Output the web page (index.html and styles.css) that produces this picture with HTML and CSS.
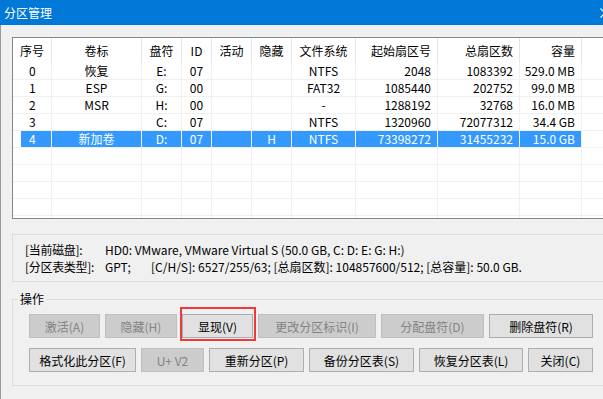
FILE: index.html
```html
<!DOCTYPE html>
<html lang="zh-CN">
<head>
    <meta charset="UTF-8">
    <title>分区管理</title>
    <link rel="stylesheet" href="styles.css">
</head>
<body>
<div class="window">
    <div class="titlebar">
        <span class="title">分区管理</span>
        <svg class="close-icon" width="10" height="10" viewBox="0 0 10 10">
            <path d="M0.5 0.5 L9.5 9.5 M9.5 0.5 L0.5 9.5" stroke="#fff" stroke-width="1.2"/>
        </svg>
    </div>

    <div class="main">
        <!-- partition list -->
        <div class="listview">
            <div class="lv-row lv-head">
                <div class="cell first">序号</div>
                <div class="cell">卷标</div>
                <div class="cell">盘符</div>
                <div class="cell">ID</div>
                <div class="cell">活动</div>
                <div class="cell">隐藏</div>
                <div class="cell">文件系统</div>
                <div class="cell right">起始扇区号</div>
                <div class="cell right">总扇区数</div>
                <div class="cell right">容量</div>
                <div class="cell fill"></div>
            </div>
            <div class="lv-body">
                <div class="lv-row">
                    <div class="cell first">0</div>
                    <div class="cell">恢复</div>
                    <div class="cell">E:</div>
                    <div class="cell">07</div>
                    <div class="cell"></div>
                    <div class="cell"></div>
                    <div class="cell">NTFS</div>
                    <div class="cell right">2048</div>
                    <div class="cell right">1083392</div>
                    <div class="cell right">529.0 MB</div>
                    <div class="cell fill"></div>
                </div>
                <div class="lv-row">
                    <div class="cell first">1</div>
                    <div class="cell">ESP</div>
                    <div class="cell">G:</div>
                    <div class="cell">00</div>
                    <div class="cell"></div>
                    <div class="cell"></div>
                    <div class="cell">FAT32</div>
                    <div class="cell right">1085440</div>
                    <div class="cell right">202752</div>
                    <div class="cell right">99.0 MB</div>
                    <div class="cell fill"></div>
                </div>
                <div class="lv-row">
                    <div class="cell first">2</div>
                    <div class="cell">MSR</div>
                    <div class="cell">H:</div>
                    <div class="cell">00</div>
                    <div class="cell"></div>
                    <div class="cell"></div>
                    <div class="cell">-</div>
                    <div class="cell right">1288192</div>
                    <div class="cell right">32768</div>
                    <div class="cell right">16.0 MB</div>
                    <div class="cell fill"></div>
                </div>
                <div class="lv-row">
                    <div class="cell first">3</div>
                    <div class="cell"></div>
                    <div class="cell">C:</div>
                    <div class="cell">07</div>
                    <div class="cell"></div>
                    <div class="cell"></div>
                    <div class="cell">NTFS</div>
                    <div class="cell right">1320960</div>
                    <div class="cell right">72077312</div>
                    <div class="cell right">34.4 GB</div>
                    <div class="cell fill"></div>
                </div>
                <div class="lv-row selected">
                    <div class="cell first">4</div>
                    <div class="cell">新加卷</div>
                    <div class="cell">D:</div>
                    <div class="cell">07</div>
                    <div class="cell"></div>
                    <div class="cell">H</div>
                    <div class="cell">NTFS</div>
                    <div class="cell right">73398272</div>
                    <div class="cell right">31455232</div>
                    <div class="cell right">15.0 GB</div>
                    <div class="cell fill"></div>
                </div>
                <div class="lv-row empty"><div class="cell"></div><div class="cell"></div><div class="cell"></div><div class="cell"></div><div class="cell"></div><div class="cell"></div><div class="cell"></div><div class="cell"></div><div class="cell"></div><div class="cell"></div><div class="cell fill"></div></div>
                <div class="lv-row empty"><div class="cell"></div><div class="cell"></div><div class="cell"></div><div class="cell"></div><div class="cell"></div><div class="cell"></div><div class="cell"></div><div class="cell"></div><div class="cell"></div><div class="cell"></div><div class="cell fill"></div></div>
                <div class="lv-row empty"><div class="cell"></div><div class="cell"></div><div class="cell"></div><div class="cell"></div><div class="cell"></div><div class="cell"></div><div class="cell"></div><div class="cell"></div><div class="cell"></div><div class="cell"></div><div class="cell fill"></div></div>
                <div class="lv-row empty"><div class="cell"></div><div class="cell"></div><div class="cell"></div><div class="cell"></div><div class="cell"></div><div class="cell"></div><div class="cell"></div><div class="cell"></div><div class="cell"></div><div class="cell"></div><div class="cell fill"></div></div>
                <div class="lv-row empty"><div class="cell"></div><div class="cell"></div><div class="cell"></div><div class="cell"></div><div class="cell"></div><div class="cell"></div><div class="cell"></div><div class="cell"></div><div class="cell"></div><div class="cell"></div><div class="cell fill"></div></div>
            </div>
        </div>

        <!-- disk info -->
        <div class="infobox">
            <div class="info-line">
                <span class="info-label">[当前磁盘]:</span>
                <span class="info-value">HD0: VMware, VMware Virtual S (50.0 GB, C: D: E: G: H:)</span>
            </div>
            <div class="info-line">
                <span class="info-label">[分区表类型]:</span>
                <span class="info-type">GPT;</span>
                <span class="info-value">[C/H/S]: 6527/255/63; [总扇区数]: 104857600/512; [总容量]: 50.0 GB.</span>
            </div>
        </div>

        <!-- actions -->
        <fieldset class="ops">
            <legend>操作</legend>
            <div class="btn-row">
                <button class="btn w71" disabled>激活(A)</button>
                <button class="btn w72" disabled>隐藏(H)</button>
                <span class="mark"><button class="btn w71">显现(V)</button></span>
                <button class="btn w118" disabled>更改分区标识(I)</button>
                <button class="btn w103" disabled>分配盘符(D)</button>
                <button class="btn w104">删除盘符(R)</button>
            </div>
            <div class="btn-row">
                <button class="btn w107">格式化此分区(F)</button>
                <button class="btn w63" disabled>U+ V2</button>
                <button class="btn w95">重新分区(P)</button>
                <button class="btn w105">备份分区表(S)</button>
                <button class="btn w104">恢复分区表(L)</button>
                <button class="btn w65">关闭(C)</button>
            </div>
        </fieldset>
    </div>
</div>
</body>
</html>
```

FILE: styles.css
```css
html, body {
    margin: 0;
    background: #f0f0f0;
    overflow: hidden;
    font-family: "Noto Sans CJK SC", sans-serif;
    font-size: 12px;
    color: #000;
}
.window {
    width: 629px;
    height: 399px;
}
.titlebar {
    display: flex;
    align-items: center;
    height: 25px;
    padding-left: 4px;
    background: #0078d7;
    color: #fff;
}
.title {
    font-size: 12px;
    line-height: 25px;
}
.close-icon {
    margin-left: auto;
    margin-right: 19px;
}
.main {
    height: 374px;
    padding: 12px 0 0 11px;
    border-left: 1px solid #999;
}

/* list view */
.listview {
    box-sizing: border-box;
    height: 182px;
    border: 1px solid #828790;
    border-right: none;
    background: #fff;
    overflow: hidden;
}
.lv-row {
    display: grid;
    grid-template-columns: 39px 90px 40px 30px 40px 40px 64px 82px 82px 62px 1fr;
}
.cell {
    box-sizing: border-box;
    text-align: center;
    white-space: nowrap;
    overflow: hidden;
}
.cell.right {
    text-align: right;
    padding-right: 6px;
}
.lv-head .cell {
    height: 25px;
    line-height: 25px;
    border-right: 1px solid #e5e5e5;
}
.lv-head .cell.first {
    text-align: left;
    padding-left: 7px;
}
.lv-body .cell {
    height: 17px;
    line-height: 16px;
    border-right: 1px solid #f0f0f0;
    border-bottom: 1px solid #f0f0f0;
}
.lv-body .cell.first {
    text-align: left;
    padding-left: 16px;
}
.lv-row .cell.fill {
    border-right: none;
}
.selected .cell {
    background: #3399ff;
    color: #fff;
}
.selected .cell.first {
    background: linear-gradient(to right, #fff 8px, #3399ff 8px);
}
.selected .cell.fill {
    background: #fff;
}

/* info */
.infobox {
    box-sizing: border-box;
    height: 48px;
    margin-top: 15px;
    padding: 6px 12px 0;
    border: 1px solid #dcdcdc;
    border-right: none;
    line-height: 17px;
}
.info-line {
    display: flex;
    white-space: nowrap;
}
.info-label {
    flex: 0 0 80px;
    letter-spacing: -0.3px;
}
.info-type {
    flex: 0 0 46px;
}

/* actions */
.ops {
    margin: 10px 0 0;
    padding: 8px 0 13px 16px;
    min-width: 0;
    border: 1px solid #dcdcdc;
    border-right: none;
}
.ops legend {
    margin-left: -11px;
    padding: 0 2px;
    line-height: 14px;
}
.btn-row {
    display: flex;
    gap: 5px;
}
.btn-row + .btn-row {
    margin-top: 10px;
}
.btn {
    box-sizing: border-box;
    height: 24px;
    padding: 0;
    border: 1px solid #adadad;
    background: #e1e1e1;
    font-family: inherit;
    font-size: 12px;
    color: #000;
    white-space: nowrap;
}
.btn:disabled {
    border-color: #bfbfbf;
    background: #cccccc;
    color: #838383;
}
.mark {
    position: relative;
    display: flex;
}
.mark::after {
    content: "";
    position: absolute;
    left: -2px;
    top: -7px;
    box-sizing: border-box;
    width: 76px;
    height: 34px;
    border: 2px solid #ef3a3a;
}
.w63 { width: 63px; }
.w65 { width: 65px; }
.w71 { width: 71px; }
.w72 { width: 72px; }
.w95 { width: 95px; }
.w103 { width: 103px; }
.w104 { width: 104px; }
.w105 { width: 105px; }
.w107 { width: 107px; }
.w118 { width: 118px; }
```
